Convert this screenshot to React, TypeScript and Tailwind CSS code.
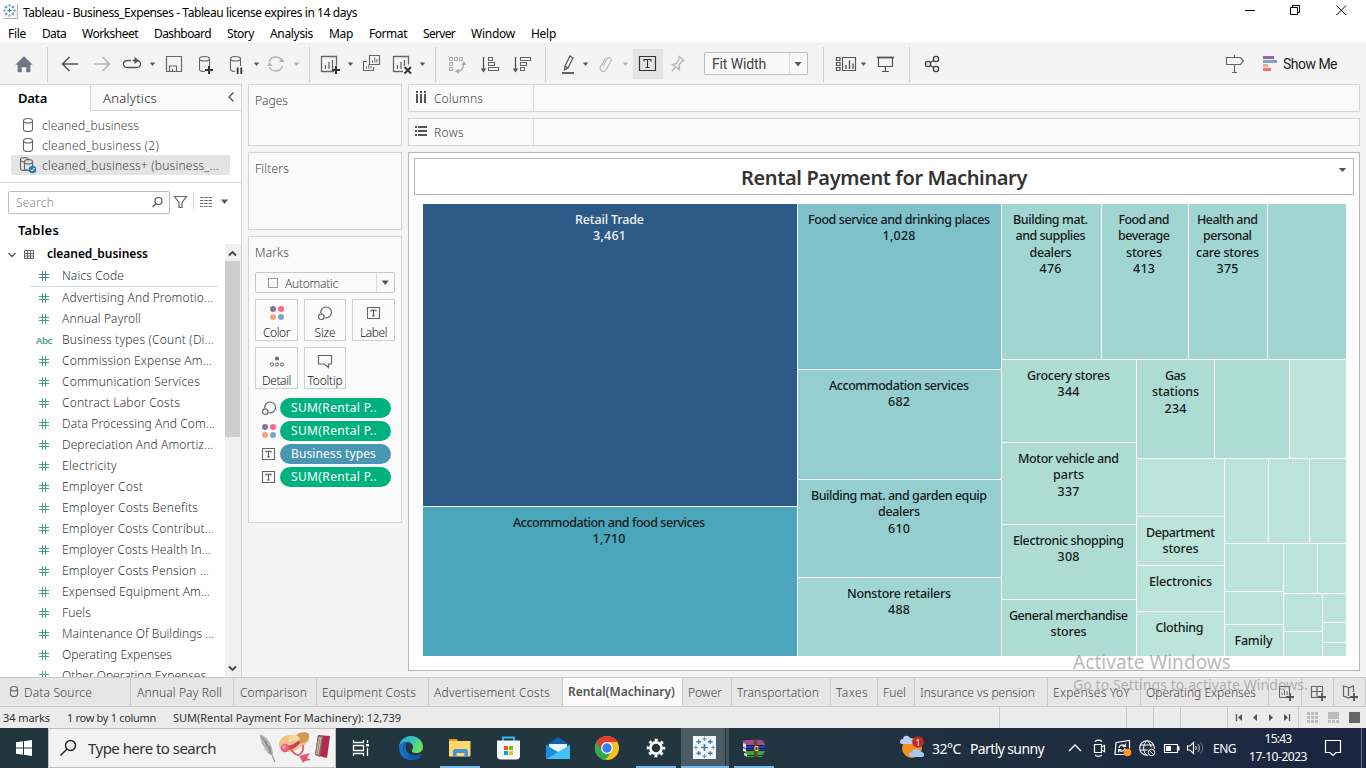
import { useLayoutEffect, useRef, type ReactNode } from "react";

/* Text run whose tracking is fitted to a column width. */
function Fit({ w, className = "", children }: { w: number; className?: string; children: string }) {
  const ref = useRef<HTMLSpanElement>(null);
  useLayoutEffect(() => {
    const el = ref.current;
    if (!el) return;
    el.style.letterSpacing = "0px";
    const natural = el.getBoundingClientRect().width;
    el.style.letterSpacing = `${((w - natural) / children.length).toFixed(3)}px`;
  }, [w, children]);
  return (
    <span ref={ref} className={`inline-block shrink-0 self-center whitespace-pre ${className}`}>
      {children}
    </span>
  );
}

/* Slice of a bar; x and y are the origin of the slice in window space. */
function Pic({ x, y, w, h, children, className = "" }: { x: number; y: number; w: number; h: number; children?: ReactNode; className?: string }) {
  return (
    <svg width={w} height={h} viewBox={`${x} ${y} ${w} ${h}`} fill="none" className={`block shrink-0 ${className}`}>
      {children}
    </svg>
  );
}

function Caret({ x, y = 62.5, c = "#555" }: { x: number; y?: number; c?: string }) {
  return <path d={`M${x - 2.7} ${y}h5.4l-2.7 3.6z`} fill={c} />;
}

function Sep() {
  return <div className="mt-[3px] h-[35px] w-px shrink-0 bg-[#d0d0d0]" />;
}

function Cyl({ x, y, w = 10, h = 13, c = "#666" }: { x: number; y: number; w?: number; h?: number; c?: string }) {
  return (
    <path
      d={`M${x} ${y + 2.2}v${h - 4.4}c0 3 ${w} 3 ${w} 0v-${h - 4.4}M${x} ${y + 2.2}c0 -3 ${w} -3 ${w} 0c0 3 -${w} 3 -${w} 0`}
      stroke={c}
      strokeWidth="1.1"
    />
  );
}

function TableauMark({ cx, cy, s, c1, c2 }: { cx: number; cy: number; s: number; c1: string; c2: string }) {
  const plus = (x: number, y: number, r: number) => `M${cx + (x - r) * s} ${cy + y * s}h${2 * r * s}M${cx + x * s} ${cy + (y - r) * s}v${2 * r * s}`;
  return (
    <>
      <path d={plus(0, 0, 3)} stroke={c1} strokeWidth={1.4 * s} />
      <path d={plus(-5, -5, 2) + plus(5, -5, 2) + plus(-5, 5, 2) + plus(5, 5, 2)} stroke={c1} strokeWidth={1.1 * s} />
      <path d={plus(0, -7.5, 1.8) + plus(0, 7.5, 1.8) + plus(-7.5, 0, 1.8) + plus(7.5, 0, 1.8)} stroke={c2} strokeWidth={1 * s} />
    </>
  );
}

function TitleBar() {
  return (
    <div className="flex h-[23px] bg-white text-black">
      <Pic x={0} y={0} w={23} h={23}>
        <path d="M3 3.500h14.500v15H3z" fill="#f7f7f7" />
        <path d="M17.500 4v14.500H3" stroke="#b5b5b5" />
        <TableauMark cx={9.500} cy={10.500} s={0.68} c1="#2f6f9e" c2="#3f8fc0" />
      </Pic>
      <Fit w={334} className="pt-px text-[12px] leading-[23px]">Tableau - Business_Expenses - Tableau license expires in 14 days</Fit>
      <div className="flex-1" />
      <Pic x={1236} y={0} w={130} h={23}>
        <path d="M1245 10.500h10" stroke="#000" />
        <path d="M1290.500 7.500h7v7h-7zM1292.500 7.500v-2h7v7h-2" stroke="#000" />
        <path d="M1336.500 5.500l9.500 9.500M1346 5.500l-9.500 9.500" stroke="#000" />
      </Pic>
    </div>
  );
}

const MENU: [string, string, number][] = [
  ["File", "ml-2", 18],
  ["Data", "ml-4", 24],
  ["Worksheet", "ml-4", 56],
  ["Dashboard", "ml-4", 57],
  ["Story", "ml-4", 27],
  ["Analysis", "ml-4", 43],
  ["Map", "ml-4", 24],
  ["Format", "ml-4", 38],
  ["Server", "ml-4", 32],
  ["Window", "ml-4", 44],
  ["Help", "ml-4", 25],
];

function MenuBar() {
  return (
    <div className="flex h-5 bg-white text-[12px] leading-5 text-black">
      {MENU.map(([t, m, w]) => (
        <span key={t} className={`flex ${m}`}>
          <Fit w={w} className="pt-0.5">{t}</Fit>
        </span>
      ))}
    </div>
  );
}

function Toolbar() {
  return (
    <div className="flex h-[41px] border-t border-[#ebebeb] bg-[#f4f4f4]">
      <Pic x={0} y={44} w={47} h={40}>
        <path d="M24 56.300l8.700 8.400h-2.400v7.500h-4v-5h-4.600v5h-4v-7.500h-2.400z" fill="#6d7987" />
      </Pic>
      <Sep />
      <Pic x={48} y={44} w={261} h={40}>
        <path d="M78 64H63M69.500 57l-7 7 7 7" stroke="#555" strokeWidth="1.600" />
        <path d="M94 64h15M102.500 57l7 7-7 7" stroke="#b5b5b5" strokeWidth="1.600" />
        <path d="M131 60.500h-3c-6 0-6 7 0 7h8c6 0 6-7 .5-7h-4" stroke="#555" strokeWidth="1.300" />
        <path d="M134.500 57v7l4.500-3.500z" fill="#555" />
        <Caret x={152.500} />
        <path d="M166.500 56.500h15v15h-15zM169.500 71v-5h7v5M172.500 69v2" stroke="#666" strokeWidth="1.200" />
        <Cyl x={199.500} y={56.500} w={10} h={15} />
        <path d="M205 71h8M209 67v8" stroke="#f4f4f4" strokeWidth="4.500" />
        <path d="M205 70h8M209 66v8" stroke="#333" strokeWidth="2" />
        <Cyl x={230.500} y={56.500} w={10} h={15} />
        <path d="M235 66h8v8h-8z" fill="#f4f4f4" />
        <path d="M237.700 67.500v6.500M241.300 67.500v6.500" stroke="#333" strokeWidth="1.800" />
        <Caret x={256.500} />
        <path d="M269 62a7 7 0 0 1 13-1M282.500 66a7 7 0 0 1-13 1" stroke="#b5b5b5" strokeWidth="1.400" />
        <path d="M279 62h5.500l-2.500-4zM267 66h5.500l-3-4z" fill="#b5b5b5" />
        <Caret x={296.500} c="#b0b0b0" />
      </Pic>
      <Sep />
      <Pic x={310} y={44} w={125} h={40}>
        <path d="M334 71.500h-12.500v-15h15v9M325.500 69v-4M329 69v-7M332.500 69v-9" stroke="#666" strokeWidth="1.300" />
        <path d="M332 70h8M336 66v8" stroke="#333" strokeWidth="2" />
        <Caret x={350.500} />
        <path d="M369.500 55.500h10v9h-10zM367 61.500h-3.500v9h10v-3.500" stroke="#666" strokeWidth="1.100" />
        <path d="M372.500 62.500v-2M374.800 62.500v-5M377 62.500v-3.500M366.500 68.500v-2M368.800 68.500v-4M371 68.500v-2.500" stroke="#666" />
        <path d="M403 71.500h-9.500v-15h15v8M397.500 69v-4M401 69v-7M404.500 66v-6" stroke="#666" strokeWidth="1.300" />
        <path d="M404.500 67l6.500 6.500M411 67l-6.500 6.500" stroke="#333" strokeWidth="2" />
        <Caret x={422.500} />
      </Pic>
      <Sep />
      <Pic x={436} y={44} w={109} h={40}>
        <path d="M449.500 57.500h3v3h-3zM454.500 57.500h3v3h-3zM459.500 57.500h3v3h-3zM449.500 62.500h3v3h-3zM449.500 67.500h3v3h-3z" stroke="#aaa" />
        <path d="M463.500 64c0 5-2 7-6 7.500" stroke="#aaa" strokeWidth="1.300" />
        <path d="M461 65l3-4 2.500 4zM459 68.500l-4 3 4 2.500z" fill="#aaa" />
        <path d="M483.500 57v13" stroke="#555" strokeWidth="1.300" />
        <path d="M480.800 68.500h5.400l-2.700 4z" fill="#555" />
        <path d="M488.500 57.500h4v3h-4zM488.500 62.500h6v3h-6zM488.500 67.500h10v3h-10z" stroke="#666" strokeWidth="1.100" />
        <path d="M515.500 57v13" stroke="#555" strokeWidth="1.300" />
        <path d="M512.800 68.500h5.400l-2.700 4z" fill="#555" />
        <path d="M520.500 57.500h10v3h-10zM520.500 62.500h6v3h-6zM520.500 67.500h4v3h-4z" stroke="#666" strokeWidth="1.100" />
      </Pic>
      <Sep />
      <Pic x={546} y={44} w={87} h={40}>
        <path d="M570 56l3 2-5 10-3.500 2 .5-4zM565 66l3 2" stroke="#555" strokeWidth="1.200" />
        <path d="M562 73h12" stroke="#555" strokeWidth="1.800" />
        <Caret x={585.500} />
        <path d="M603 66l4-7c1.500-3 5.500-.5 4 2l-5 9c-2 3-7 .5-5.500-3l5-9" stroke="#b8b8b8" strokeWidth="1.200" />
        <Caret x={625.500} c="#b0b0b0" />
      </Pic>
      <div className="mt-[5px] h-[30px] w-[30px] shrink-0 bg-[#e4e4e4]">
        <Pic x={633} y={49} w={30} h={30}>
          <path d="M639.500 56.500h16v14h-16z" stroke="#333" strokeWidth="1.200" />
          <path d="M644 61.500v-2h7v2M647.500 59.500v8M645.500 67.500h4" stroke="#333" strokeWidth="1.100" />
        </Pic>
      </div>
      <Pic x={663} y={44} w={41} h={40}>
        <path d="M679 56.500l5 4-2 .5-3 4 .5 4.500-7-5 4-1 2.500-4.500zM675 67.500l-3 3.500" stroke="#b5b5b5" strokeWidth="1.300" />
      </Pic>
      <div className="mt-2 flex h-[23px] w-[104px] shrink-0 rounded-[2px] border border-[#bdbdbd] bg-[#f8f8f8]">
        <div className="flex w-[85px] items-center border-r border-[#dcdcdc] pl-[7px] font-['Roboto',sans-serif] text-[14px] leading-none text-[#444]">
          <Fit w={54}>Fit Width</Fit>
        </div>
        <Pic x={790} y={53} w={17} h={21}>
          <path d="M794.500 62h7l-3.500 4.500z" fill="#555" />
        </Pic>
      </div>
      <div className="w-[15px] shrink-0" />
      <Sep />
      <Pic x={824} y={44} w={85} h={40}>
        <path d="M836.500 57.500h3.500v3h-3.500zM836.500 62.500h3.500v3h-3.500zM836.500 67.500h3.500v3h-3.500zM842.500 57.500h13v13h-13z" stroke="#555" strokeWidth="1.200" />
        <path d="M846 69v-4M849.500 69v-8.500M853 69v-5.500" stroke="#555" strokeWidth="1.400" />
        <Caret x={863.500} />
        <path d="M877 57.500h17" stroke="#555" strokeWidth="1.800" />
        <path d="M878.500 58v8.500h14V58M885.500 66.500v5M882 71.500h7" stroke="#555" strokeWidth="1.200" />
      </Pic>
      <Sep />
      <Pic x={910} y={44} w={60} h={40}>
        <path d="M930.500 62.500l3-2M930.500 65.500l3 2" stroke="#444" strokeWidth="1.300" />
        <circle cx="928" cy="64" r="2.600" stroke="#444" strokeWidth="1.400" />
        <circle cx="936" cy="59" r="2.600" stroke="#444" strokeWidth="1.400" />
        <circle cx="936" cy="69" r="2.600" stroke="#444" strokeWidth="1.400" />
      </Pic>
      <div className="flex-1" />
      <Pic x={1220} y={44} w={63} h={40}>
        <path d="M1226.500 57.500h14l3 3.500-3 3.500h-14zM1234.500 55v2.500M1234.500 64.500v8M1232 72.500h5" stroke="#666" strokeWidth="1.200" />
        <path d="M1263 56h11v3h-11z" fill="#87709b" />
        <path d="M1263 60h14v3h-14z" fill="#7ea3cc" />
        <path d="M1263 64h5v3h-5z" fill="#f3a680" />
        <path d="M1263 68h8v3h-8z" fill="#f96a7d" />
      </Pic>
      <div className="flex w-[83px] font-['Roboto',sans-serif] text-[14px] leading-[38px] text-[#222]">
        <Fit w={54}>Show Me</Fit>
      </div>
    </div>
  );
}

const FIELDS: [string, number][] = [
  ["Advertising And Promotio...", 151],
  ["Annual Payroll", 79],
  ["Business types (Count (Di...", 152],
  ["Commission Expense Am...", 150],
  ["Communication Services", 138],
  ["Contract Labor Costs", 118],
  ["Data Processing And Com...", 153],
  ["Depreciation And Amortiz...", 151],
  ["Electricity", 55],
  ["Employer Cost", 81],
  ["Employer Costs Benefits", 136],
  ["Employer Costs Contribut...", 152],
  ["Employer Costs Health In...", 149],
  ["Employer Costs Pension ...", 147],
  ["Expensed Equipment Am...", 148],
  ["Fuels", 29],
  ["Maintenance Of Buildings ...", 152],
  ["Operating Expenses", 110],
  ["Other Operating Expenses", 144],
];

function Hash({ c }: { c: string }) {
  return (
    <svg width="10" height="10" viewBox="0 0 10 10" fill="none" className="block shrink-0">
      <path d="M3.500 0v10M6.500 0v10M0 3.500h10M0 6.500h10" stroke={c} strokeWidth="1" />
    </svg>
  );
}

function FieldRow({ name, w, color }: { name: string; w: number; color: string }) {
  const abc = name.startsWith("Business types");
  return (
    <div className="flex h-[21px] shrink-0 items-center text-[12px] leading-[21px] text-[#333]">
      <div className="flex w-[62px] shrink-0 items-center pl-[39px]">
        {abc ? <Fit w={16} className="-ml-[3px] pt-px text-[9.500px] font-semibold text-[#4aa583]">Abc</Fit> : <Hash c={color} />}
      </div>
      <Fit w={w}>{name}</Fit>
    </div>
  );
}

function DataPane() {
  return (
    <div className="flex h-full w-[242px] shrink-0 flex-col border-r border-[#d4d4d4] bg-white font-light">
      <div className="flex h-[27px] shrink-0 text-[13px] leading-[26px] text-[#222]">
        <div className="flex w-[90px] border-t border-[#d4d4d4] pl-[18px]">
          <Fit w={29} className="font-semibold text-black">Data</Fit>
        </div>
        <div className="flex flex-1 justify-between border border-r-0 border-[#d4d4d4] bg-[#fafafa] pl-3">
          <Fit w={54} className="text-[13px]">Analytics</Fit>
          <Pic x={221} y={85} w={20} h={25}>
            <path d="M233.500 92.500l-4.500 4.500 4.500 4.500" stroke="#555" strokeWidth="1.300" />
          </Pic>
        </div>
      </div>
      <div className="flex h-[72px] shrink-0 flex-col border-b border-[#dcdcdc] pt-1 text-[12px] leading-5 text-[#444]">
        <div className="flex h-5">
          <Pic x={0} y={115} w={42} h={20}>
            <Cyl x={23.500} y={118.500} w={9} h={13} />
          </Pic>
          <Fit w={97} className="pt-px">cleaned_business</Fit>
        </div>
        <div className="flex h-5">
          <Pic x={0} y={135} w={42} h={20}>
            <Cyl x={23.500} y={138.500} w={9} h={13} />
          </Pic>
          <Fit w={117} className="pt-px">cleaned_business (2)</Fit>
        </div>
        <div className="mr-[11px] ml-[11px] flex h-5 bg-[#e4e4e4]">
          <Pic x={11} y={155} w={31} h={20}>
            <Cyl x={20.500} y={157.500} w={8} h={13} />
            <path d="M25 160.500h8v9h-8z" fill="#e4e4e4" />
            <Cyl x={24.500} y={159.500} w={8} h={11} />
            <circle cx="32.500" cy="169.500" r="3.800" fill="#2e7da0" />
            <path d="M30.500 169.500l1.500 1.500 2.500-3" stroke="#fff" />
          </Pic>
          <Fit w={177} className="pt-px">cleaned_business+ (business_...</Fit>
        </div>
      </div>
      <div className="flex h-[38px] shrink-0 pt-2 pl-2">
        <div className="flex h-[23px] w-[162px] items-center justify-between rounded-[2px] border border-[#bbb] pl-[7px] text-[12px] leading-[21px] text-[#888]">
          <Fit w={38}>Search</Fit>
          <Pic x={149} y={192} w={20} h={21}>
            <circle cx="158.500" cy="201" r="3.500" stroke="#555" strokeWidth="1.200" />
            <path d="M156 203.500l-3.500 3.500" stroke="#555" strokeWidth="1.300" />
          </Pic>
        </div>
        <Pic x={170} y={191} w={70} h={23}>
          <path d="M174.500 196.500h12l-4.500 6v5h-3v-5z" stroke="#666" strokeWidth="1.200" />
          <path d="M193.500 193v17" stroke="#d4d4d4" />
          <path d="M200 197.500h12M200 200.500h12M200 203.500h12M200 206.500h12" stroke="#666" strokeWidth="1.200" strokeDasharray="3.300 1" />
          <path d="M221 199.500h7l-3.500 4.500z" fill="#555" />
        </Pic>
      </div>
      <div className="flex h-[23px] shrink-0 pb-[5px] pl-[18px] text-[13px] leading-[18px] font-semibold text-black">
        <Fit w={41}>Tables</Fit>
      </div>
      <div className="flex min-h-0 flex-1">
        <div className="flex w-[225px] flex-col overflow-hidden">
          <div className="flex h-[21px] shrink-0 text-[12px] leading-[20px] font-semibold text-black">
            <Pic x={0} y={244} w={47} h={21}>
              <path d="M8.500 253l3.500 3.500 3.500-3.500" stroke="#555" strokeWidth="1.300" />
              <path d="M24.500 250.500h9v8h-9zM24.500 253.500h9M24.500 256h9M27.500 251v7.500M30.500 251v7.500" stroke="#666" />
            </Pic>
            <Fit w={101} className="self-start">cleaned_business</Fit>
          </div>
          <FieldRow name="Naics Code" w={62} color="#3f7f9f" />
          <div className="mr-[7px] mb-0 ml-[30px] h-px shrink-0 bg-[#dcdcdc]" />
          {FIELDS.map(([n, w]) => (
            <FieldRow key={n} name={n} w={w} color="#45a17e" />
          ))}
        </div>
        <div className="flex h-full w-4 flex-col bg-[#f0f0f0]">
          <Pic x={225} y={244} w={15} h={17}>
            <path d="M229 255.500l3.500-3.500 3.500 3.500" stroke="#444" strokeWidth="1.800" />
          </Pic>
          <div className="h-[176px] w-[15px] bg-[#cdcdcd]" />
          <div className="flex-1" />
          <Pic x={225} y={660} w={15} h={17}>
            <path d="M229 666.500l3.500 3.500 3.500-3.500" stroke="#444" strokeWidth="1.800" />
          </Pic>
        </div>
      </div>
    </div>
  );
}

const DOTS = ["#87709b", "#f96a7d", "#f3a680", "#7ea3cc"];
function ColorIcon() {
  return (
    <svg width="16" height="16" viewBox="0 0 16 16" className="block shrink-0">
      {DOTS.map((c, i) => (
        <circle key={c} cx={4 + (i % 2) * 8} cy={4 + Math.floor(i / 2) * 8} r="3" fill={c} />
      ))}
    </svg>
  );
}
function SizeIcon() {
  return (
    <svg width="16" height="16" viewBox="0 0 16 16" fill="none" className="block shrink-0">
      <path d="M3.800 8.200a5.400 5.400 0 1 1 4.300 4.500" stroke="#666" strokeWidth="1.200" />
      <circle cx="4.300" cy="11.700" r="2.800" stroke="#666" strokeWidth="1.200" />
    </svg>
  );
}
function TextIcon() {
  return (
    <svg width="16" height="16" viewBox="0 0 16 16" fill="none" className="block shrink-0">
      <path d="M1.500 2.500h12v11h-12z" stroke="#666" strokeWidth="1.100" />
      <path d="M5 6.500v-1.300h5v1.300M7.500 5.200v5.800M6.200 11h2.600" stroke="#555" strokeWidth="1.100" />
    </svg>
  );
}
function DetailIcon() {
  return (
    <svg width="16" height="16" viewBox="0 0 16 16" fill="none" className="block shrink-0">
      <circle cx="8" cy="5.500" r="2" fill="#666" />
      <circle cx="3" cy="11.500" r="1.600" stroke="#666" />
      <circle cx="8" cy="11.500" r="1.600" stroke="#666" />
      <circle cx="13" cy="11.500" r="1.600" stroke="#666" />
    </svg>
  );
}
function TooltipIcon() {
  return (
    <svg width="16" height="16" viewBox="0 0 16 16" fill="none" className="block shrink-0">
      <path d="M1.500 2.500h13v8.500h-3v3.500l-4-3.500h-6z" stroke="#666" strokeWidth="1.200" />
    </svg>
  );
}

function MarkButton({ icon, label, w }: { icon: ReactNode; label: string; w: number }) {
  return (
    <div className="flex h-[42px] flex-col items-center border border-[#d0d0d0] bg-[#fafafa] pt-[5px] text-[12px] leading-[14px] text-[#222]">
      {icon}
      <span className="mt-[4px] flex">
        <Fit w={w} className="pt-px">{label}</Fit>
      </span>
    </div>
  );
}

function Pill({ icon, label, w, blue }: { icon: ReactNode; label: string; w: number; blue?: boolean }) {
  return (
    <div className="flex h-5 items-center gap-[3px] pl-[12px]">
      {icon}
      <div className={`flex h-5 w-[111px] rounded-full pl-[11px] text-[12px] leading-5 font-normal text-white ${blue ? "bg-[#4996b2]" : "bg-[#00b180]"}`}>
        <Fit w={w}>{label}</Fit>
      </div>
    </div>
  );
}

function Cards() {
  return (
    <div className="ml-[6px] flex w-[154px] shrink-0 flex-col gap-1.5 text-[12px] font-light text-[#444]">
      <div className="flex h-[62px] items-start border border-[#d4d4d4] bg-[#fafafa] pt-[7px] pl-1.5 leading-[18px]">
        <Fit w={33} className="self-start">Pages</Fit>
      </div>
      <div className="flex h-[78px] items-start border border-[#d4d4d4] bg-[#fafafa] pt-[7px] pl-1.5 leading-[18px]">
        <Fit w={34} className="self-start">Filters</Fit>
      </div>
      <div className="flex h-[287px] flex-col border border-[#d4d4d4] bg-[#fafafa] pl-1.5">
        <div className="flex h-[35px] pb-[4px] leading-[18px]">
          <Fit w={34}>Marks</Fit>
        </div>
        <div className="flex h-[21px] w-[140px] rounded-[2px] border border-[#c8c8c8]">
          <div className="flex w-[121px] items-center border-r border-[#dcdcdc] leading-[19px]">
            <div className="mr-[7px] ml-3 h-[10px] w-[10px] border border-[#999]" />
            <Fit w={53} className="pt-px">Automatic</Fit>
          </div>
          <Pic x={377} y={273} w={17} h={19}>
            <path d="M381.800 280.500h7l-3.500 4.500z" fill="#555" />
          </Pic>
        </div>
        <div className="mt-1.5 grid w-[140px] grid-cols-[43px_42px_43px] gap-1.5">
          <MarkButton icon={<ColorIcon />} label="Color" w={27} />
          <MarkButton icon={<SizeIcon />} label="Size" w={21} />
          <MarkButton icon={<TextIcon />} label="Label" w={27} />
          <MarkButton icon={<DetailIcon />} label="Detail" w={29} />
          <MarkButton icon={<TooltipIcon />} label="Tooltip" w={35} />
        </div>
        <div className="mt-[9px] -ml-1.5 flex flex-col gap-[3px]">
          <Pill icon={<SizeIcon />} label="SUM(Rental P.." w={86} />
          <Pill icon={<ColorIcon />} label="SUM(Rental P.." w={86} />
          <Pill icon={<TextIcon />} label="Business types" w={85} blue />
          <Pill icon={<TextIcon />} label="SUM(Rental P.." w={86} />
        </div>
      </div>
    </div>
  );
}

/* Treemap marks: left, top, right, bottom, fill. */
const MARKS: [number, number, number, number, string][] = [
  [423, 204, 797, 506, "#2c5985"],
  [423, 507, 797, 656, "#4ba5bb"],
  [798, 204, 1001, 369, "#7ec1ca"],
  [798, 370, 1001, 479, "#95cecf"],
  [798, 480, 1001, 577, "#95cecf"],
  [798, 578, 1001, 656, "#a1d5d2"],
  [1002, 204, 1101, 359, "#a1d5d2"],
  [1102, 204, 1188, 359, "#a1d5d2"],
  [1189, 204, 1267, 359, "#a1d5d2"],
  [1268, 204, 1346, 359, "#a1d5d2"],
  [1002, 360, 1136, 442, "#aedcd5"],
  [1002, 443, 1136, 524, "#aedcd5"],
  [1002, 525, 1136, 599, "#aedcd5"],
  [1002, 600, 1136, 656, "#aedcd5"],
  [1137, 360, 1214, 458, "#aedcd5"],
  [1215, 360, 1289, 458, "#aedcd5"],
  [1290, 360, 1346, 458, "#bce4d8"],
  [1137, 459, 1224, 516, "#bce4d8"],
  [1137, 517, 1224, 565, "#bce4d8"],
  [1137, 566, 1224, 611, "#bce4d8"],
  [1137, 612, 1224, 656, "#bce4d8"],
  [1225, 459, 1268, 543, "#bce4d8"],
  [1269, 459, 1309, 543, "#bce4d8"],
  [1310, 459, 1346, 543, "#bce4d8"],
  [1225, 544, 1283, 591, "#bce4d8"],
  [1225, 592, 1283, 624, "#bce4d8"],
  [1225, 625, 1283, 656, "#bce4d8"],
  [1284, 544, 1317, 593, "#bce4d8"],
  [1318, 544, 1346, 593, "#bce4d8"],
  [1284, 594, 1322, 631, "#bce4d8"],
  [1284, 632, 1322, 656, "#bce4d8"],
  [1323, 594, 1346, 622, "#bce4d8"],
  [1323, 623, 1346, 642, "#bce4d8"],
  [1323, 643, 1346, 656, "#bce4d8"],
];

/* Mark labels: center, baseline of the first line, then [text, width] lines. */
const LABELS: [number, number, [string, number][]][] = [
  [609.5, 224, [["Retail Trade", 69], ["3,461", 33]]],
  [609, 527, [["Accommodation and food services", 192], ["1,710", 33]]],
  [899, 224, [["Food service and drinking places", 182], ["1,028", 33]]],
  [899, 390, [["Accommodation services", 140], ["682", 22]]],
  [899, 500, [["Building mat. and garden equip", 176], ["dealers", 42], ["610", 22]]],
  [899, 598, [["Nonstore retailers", 104], ["488", 22]]],
  [1050.5, 224, [["Building mat.", 75], ["and supplies", 70], ["dealers", 42], ["476", 22]]],
  [1144, 224, [["Food and", 51], ["beverage", 52], ["stores", 36], ["413", 22]]],
  [1227.5, 224, [["Health and", 61], ["personal", 49], ["care stores", 63], ["375", 22]]],
  [1068.5, 380, [["Grocery stores", 83], ["344", 22]]],
  [1068.5, 463, [["Motor vehicle and", 101], ["parts", 31], ["337", 22]]],
  [1068.5, 545, [["Electronic shopping", 111], ["308", 22]]],
  [1068.5, 620, [["General merchandise", 119], ["stores", 36]]],
  [1175.5, 380, [["Gas", 21], ["stations", 47], ["234", 22]]],
  [1180.5, 537, [["Department", 69], ["stores", 36]]],
  [1180.5, 586, [["Electronics", 63]]],
  [1179.5, 632, [["Clothing", 48]]],
  [1253.5, 645, [["Family", 38]]],
];

function Treemap() {
  return (
    <svg width="923" height="452" viewBox="423 204 923 452" className="mt-[9px] ml-[8px] block font-medium">
      {MARKS.map(([l, t, r, b, c]) => (
        <rect key={`${l}-${t}`} x={l} y={t} width={r - l} height={b - t} fill={c} />
      ))}
      {LABELS.map(([cx, by, lines], i) =>
        lines.map(([t, w], j) => (
          <text key={`${i}-${j}`} x={cx} y={by + Math.round(j * 16.3)} fontSize="12.500" textAnchor="middle" textLength={w} fill={i === 0 ? "#eef3f7" : "#151a1a"}>
            {t}
          </text>
        ))
      )}
    </svg>
  );
}

function Shelf({ label, w, icon, y }: { label: string; w: number; icon: string; y: number }) {
  return (
    <div className="flex h-7 border border-[#d4d4d4] bg-[#fafafa] text-[12px] leading-[26px] font-light text-[#444]">
      <div className="flex w-[125px] border-r border-[#d4d4d4]">
        <Pic x={409} y={y} w={25} h={26}>
          <path d={icon} fill="#555" />
        </Pic>
        <Fit w={w} className="pt-px">{label}</Fit>
      </div>
    </div>
  );
}

function Sheet() {
  return (
    <div className="ml-[6px] flex w-[952px] shrink-0 flex-col">
      <Shelf
        label="Columns"
        w={49}
        y={85}
        icon="M416 91h2v2h-2zM420 91h2v2h-2zM424 91h2v2h-2zM416 94h2v9h-2zM420 94h2v9h-2zM424 94h2v9h-2z"
      />
      <div className="h-1.5" />
      <Shelf
        label="Rows"
        w={30}
        y={119}
        icon="M415 126h2v2h-2zM415 130h2v2h-2zM415 134h2v2h-2zM418 126h9v2h-9zM418 130h9v2h-9zM418 134h9v2h-9z"
      />
      <div className="mt-1.5 flex h-[519px] flex-col border border-[#b5b5b5] bg-white px-[5px] pt-[5px]">
        <div className="flex h-[37px] border border-[#b5b5b5]">
          <div className="w-[326px]" />
          <Fit w={286} className="pt-0.5 text-[20px] leading-[38px] font-semibold text-[#333]">Rental Payment for Machinary</Fit>
          <div className="flex-1" />
          <Pic x={1335} y={159} w={18} h={35}>
            <path d="M1338.800 168h7.400l-3.700 4z" fill="#555" />
          </Pic>
        </div>
        <div className="-ml-px h-[462px] pl-[2px]">
          <Treemap />
        </div>
      </div>
    </div>
  );
}

const TABS: [string, number, number][] = [
  ["Annual Pay Roll", 103, 85],
  ["Comparison", 83, 67],
  ["Equipment Costs", 112, 94],
  ["Advertisement Costs", 134, 116],
  ["Rental(Machinary)", 120, 107],
  ["Power", 49, 34],
  ["Transportation", 99, 82],
  ["Taxes", 47, 32],
  ["Fuel", 37, 23],
  ["Insurance vs pension", 133, 115],
  ["Expenses YoY", 93, 77],
  ["Operating Expenses", 128, 110],
];

function SheetTabs() {
  return (
    <div className="flex h-[30px] border-y border-[#cacaca] bg-[#e6e6e6] text-[12px] leading-[30px] font-light text-[#444]">
      <div className="flex w-[131px] shrink-0 border-r border-[#cacaca]">
        <Pic x={0} y={678} w={24} h={28}>
          <Cyl x={10.500} y={686.500} w={7} h={10} />
        </Pic>
        <Fit w={68} className="pt-0.5">Data Source</Fit>
      </div>
      {TABS.map(([t, w, tw], i) => {
        const on = t.startsWith("Rental");
        return (
          <div
            key={t}
            className={`flex shrink-0 border-r border-[#cacaca] ${i < 2 ? "pl-[6px]" : "pl-[5px]"} ${on ? "bg-[#fafafa] font-semibold text-[#555]" : ""}`}
            style={{ width: w }}
          >
            <Fit w={tw} className={on ? "" : "pt-0.5"}>{t}</Fit>
          </div>
        );
      })}
      <Pic x={1269} y={678} w={97} h={28}>
        <path d="M1289 697.500h-9.500v-11h10v7M1282 695v-2.500M1284.500 695v-5M1287 695v-4" stroke="#666" />
        <path d="M1286 697h8M1290 693v8" stroke="#555" strokeWidth="1.800" />
        <path d="M1301.500 678v28M1333.500 678v28M1365.500 678v28" stroke="#cacaca" />
        <path d="M1318 697.500h-6.500v-11h11v6M1317 687v10M1311.500 691.500h11" stroke="#666" strokeWidth="1.200" />
        <path d="M1318 697h8M1322 693v8" stroke="#555" strokeWidth="1.800" />
        <path d="M1348.500 689v-1.500l-5-1.500v10l5 2 1.500-.8M1348.500 688v8M1348.500 688l5-2v6" stroke="#666" strokeWidth="1.200" />
        <path d="M1350 697h8M1354 693v8" stroke="#555" strokeWidth="1.800" />
      </Pic>
    </div>
  );
}

function StatusBar() {
  return (
    <div className="flex h-[21px] bg-[#ebebeb] text-[11px] leading-[21px] text-[#333]">
      <div className="flex w-[67px] pl-[3px]"><Fit w={47}>34 marks</Fit></div>
      <div className="flex w-[106px]"><Fit w={89}>1 row by 1 column</Fit></div>
      <Fit w={228}>SUM(Rental Payment For Machinery): 12,739</Fit>
      <div className="flex-1" />
      <Pic x={990} y={707} w={376} h={21}>
        <path d="M999.500 707v21M1126.500 707v21M1153.500 707v21M1180.500 707v21M1227.500 707v21M1298.500 707v21" stroke="#c6c6c6" />
        <path d="M1236.500 714v7M1289.500 714v7" stroke="#555" strokeWidth="1.300" />
        <path d="M1242 714v7l-4-3.500zM1257 714v7l-4-3.500zM1269 714v7l4-3.500zM1284 714v7l4-3.500z" fill="#555" />
        <path d="M1307 712h3v3h-3zM1311 712h3v3h-3zM1315 712h3v3h-3zM1307 716h3v3h-3zM1311 716h3v3h-3zM1315 716h3v3h-3zM1307 720h3v3h-3zM1311 720h3v3h-3zM1315 720h3v3h-3z" fill="#bdbdbd" />
        <path d="M1328 712h11v7h-11zM1328 720h3v3h-3zM1332 720h3v3h-3zM1336 720h3v3h-3z" fill="#bdbdbd" />
        <path d="M1349 712h11v11h-11z" fill="#666" />
      </Pic>
    </div>
  );
}

function Taskbar() {
  return (
    <div className="flex h-10 bg-linear-to-r from-[#21353e] via-[#23363f] via-50% to-[#1a2540] text-white">
      <Pic x={0} y={728} w={48} h={40}>
        <path d="M16 742.300l7-1v6.200h-7zM24 741.200l8-1.200v7.500h-8zM16 748.500h7v6.200l-7-1zM24 748.500h8v7.500l-8-1.200z" fill="#fff" />
      </Pic>
      <div className="flex w-[288px] shrink-0 border border-[#bfbfbf] bg-[#f2f2f2] text-[15px] leading-[38px] text-[#333]">
        <Pic x={49} y={729} w={39} h={38}>
          <circle cx="70.500" cy="745.500" r="5" stroke="#222" strokeWidth="1.400" />
          <path d="M67 749l-6.500 6.500" stroke="#222" strokeWidth="1.500" />
        </Pic>
        <Fit w={128}>Type here to search</Fit>
        <Pic x={216} y={729} w={119} h={38}>
          <path d="M260 734c7 3 12 9 13 20l-2 1-4-2 1-1-4-3 1-1-4-5 1-1c-2-3-2-5-2-8z" fill="#b4b4b4" />
          <path d="M261 736c5 6 9 14 14 26M266 741l1 6M270 746v7" stroke="#777" strokeWidth=".9" />
          <path d="M279 745c0-8 9-12 16-9 4-4 11-5 14-2 2 7-3 11-9 13-3 5-12 6-18 3-2-1-3-3-3-5z" fill="#f0c183" />
          <path d="M296 735c4-3 9-4 13-1 1 6-4 9-10 10z" fill="#d39a4f" />
          <path d="M289 736c4-2 9-1 11 2l-1 5c-3-3-8-3-11 0z" fill="#f8d9a5" />
          <path d="M285 746c6 0 11-3 14-6l1 3c-3 4-8 7-14 7z" fill="#c9405f" />
          <circle cx="285" cy="748" r="4.300" fill="#e2607b" />
          <circle cx="284" cy="747" r="2" fill="#f497a8" />
          <path d="M291 749c2 4 5 6 8 6M299 755c3-2 5-5 4-10" stroke="#dc5a76" strokeWidth="1.800" />
          <path d="M299 756l11-3-3 5 4 2-6 1-2 2-2-4z" fill="#dc5a76" />
          <path d="M318 735l12 1-3 22-12-3z" fill="#b5284d" />
          <path d="M318 735l5 1-3 21-5-2z" fill="#8d6f60" />
          <path d="M319.500 737l-3 17M321 737l-3 18" stroke="#e6d9c8" strokeWidth=".8" />
        </Pic>
      </div>
      <Pic x={336} y={728} w={564} h={40}>
        <path d="M353.500 740v2.500h10V740M353.500 745.500h10v5h-10zM353.500 756v-2.500h10v2.500" stroke="#fff" strokeWidth="1.300" />
        <path d="M367.500 740v3M367.500 748v8" stroke="#fff" strokeWidth="1.300" />
        <path d="M366 744h3v2.500h-3z" fill="#fff" />
        <defs>
          <linearGradient id="edgeTop" x1="0" y1="0" x2="1" y2="0.400">
            <stop offset="0" stopColor="#2aa6e6" />
            <stop offset="0.550" stopColor="#35c4c4" />
            <stop offset="1" stopColor="#6ce05a" />
          </linearGradient>
          <linearGradient id="edgeLow" x1="0" y1="0" x2="0.600" y2="1">
            <stop offset="0" stopColor="#1b86d6" />
            <stop offset="1" stopColor="#1250a0" />
          </linearGradient>
        </defs>
        <path d="M399 748c0-7 5-12 12-12s12 5 12 11c0 4-3 6-7 6-3 0-5-1-4-3 1-1 1-2 1-3 0-3-3-5-6-5-4 0-8 3-8 6z" fill="url(#edgeTop)" />
        <path d="M399 747c1-4 5-6 9-5-3 1-5 4-5 7 0 5 5 9 11 9 3 0 5-1 7-2-2 3-6 4-10 4-7 0-12-5-12-13z" fill="#1672c8" />
        <path d="M407 743c-3 4-1 10 4 12 4 1 8 0 11-2-2 6-8 8-13 6-6-3-8-12-2-16z" fill="url(#edgeLow)" />

        <path d="M449 739h8l1 2h-9z" fill="#e0a100" />
        <path d="M449 741h21.500v15.500H449z" fill="#ffd76a" />
        <path d="M453 757v-6c0-1 1-2 2-2h11c1 0 2 1 2 2v6h-3.500v-4h-8v4z" fill="#3f96d9" />
        <path d="M440 766h40v2h-40zM636 766h40v2h-40z" fill="#76b9ed" />

        <path d="M503 741v-3.500h11v3.500" stroke="#2cc0f5" strokeWidth="1.800" />
        <path d="M497 740.500h23v15c0 2.500-1 4-4 4h-15c-3 0-4-1.500-4-4z" fill="#f5f6f7" />
        <path d="M504 746h4v4h-4z" fill="#f25022" />
        <path d="M509 746h4v4h-4z" fill="#7fba00" />
        <path d="M504 751h4v4h-4z" fill="#00a4ef" />
        <path d="M509 751h4v4h-4z" fill="#ffb900" />

        <path d="M546 745l12-8 12 8-12 8z" fill="#0f62ae" />
        <path d="M549 744h18v8h-18z" fill="#e9f3fa" />
        <path d="M546 745l12 7.500-12 6.500z" fill="#2aa9ea" />
        <path d="M570 745l-24 14h24z" fill="#41c3f5" />
        <path d="M546 745v14l12-7z" fill="#1c8ee0" />

        <circle cx="607" cy="748" r="12" fill="#fbc116" />
        <path d="M607 748L596.600 742A12 12 0 0 0 605.500 759.900L612 751z" fill="#31a853" />
        <path d="M596.600 742A12 12 0 0 1 617.400 742H607a6 6 0 0 0-5.200 9z" fill="#e33b2e" />
        <circle cx="607" cy="748" r="5.900" fill="#fff" />
        <circle cx="607" cy="748" r="4.700" fill="#3b7ded" />

        <circle cx="656" cy="748" r="5.600" stroke="#fff" strokeWidth="2.600" />
        <circle cx="656" cy="748" r="8" stroke="#fff" strokeWidth="2.600" strokeDasharray="3 3.283" strokeDashoffset="1.500" />

        <path d="M681 728h44v40h-44z" fill="#4b5c66" />
        <path d="M725 728h1v40h-1z" fill="#26363f" />
        <path d="M726 728h3v40h-3z" fill="#44525c" />
        <path d="M681 766h48v2h-48zM734 766h40v2h-40z" fill="#76b9ed" />
        <path d="M693 736h23v23h-23z" fill="#f4f5f6" />
        <TableauMark cx={704.500} cy={747.500} s={1.150} c1="#3b7fae" c2="#5d9cc6" />

        <path d="M742 741l5-1h15l3 4-1 3h-18z" fill="#a04a98" />
        <path d="M744 746h20v5h-19z" fill="#2440c8" />
        <path d="M745 751h20l-3 6h-16z" fill="#2fae38" />
        <path d="M743 743l3 1v4l-3-1zM743 748l3 1v3l-3-1zM744 753l3 1v3l-3-2z" fill="#e8e0d8" />
        <path d="M746 745.500h18M746 748.500h18M746 750.500h18M747 755.500h16" stroke="#151a2a" />
        <path d="M754 739.500h3.500v17.500H754z" fill="#6a4a20" />
        <path d="M755 746.500h3v4h-3z" stroke="#e3c060" />
      </Pic>
      <Pic x={900} y={728} w={32} h={40}>
        <circle cx="912" cy="748" r="10" fill="#f3901d" />
        <path d="M902 744c-3 0-3-5 1-5 0-4 6-4 7-1 3-1 4 6 1 6z" fill="#b5cdf0" />
        <path d="M911 757c-3 0-3-5 1-5 1-4 8-4 9 0 4 0 4 5 1 5z" fill="#a9c6ef" />
        <circle cx="918" cy="742" r="5.800" fill="#c8281f" />
        <text x="918" y="745.500" fontSize="9" textAnchor="middle" fill="#fff">1</text>
      </Pic>
      <div className="flex w-[38px] text-[14px] leading-[39px]"><Fit w={29}>32°C</Fit></div>
      <div className="flex w-[92px] text-[14px] leading-[39px]"><Fit w={74}>Partly sunny</Fit></div>
      <Pic x={1062} y={728} w={151} h={40}>
        <path d="M1069 751l6-6 6 6" stroke="#fff" strokeWidth="1.400" />
        <path d="M1094.500 744.500h7v8h-7zM1101.500 747l3-1.500v6l-3-1.500M1095 741.500c2-1.500 5-1.500 7 0M1095 755c2 1.500 5 1.500 7 0" stroke="#fff" strokeWidth="1.200" />
        <path d="M1116 742.500l-1 12h9M1116 742.500l13.500-2v8" stroke="#fff" strokeWidth="1.200" />
        <path d="M1119 748c0-3 4-4 6-2M1125 748c0 3-4 4-6 2M1125.500 743.500v3h-3M1118.500 752.500v-3h3" stroke="#fff" strokeWidth="1.100" />
        <circle cx="1127.500" cy="752.500" r="3.800" fill="#ff9a1a" />
        <circle cx="1147" cy="748" r="7.300" stroke="#fff" strokeWidth="1.100" />
        <path d="M1147 740.500c-4.500 4-4.500 11 0 15M1147 740.500c3 2.500 4 5 4 7M1140.500 745h13M1140 750h8" stroke="#fff" />
        <circle cx="1151.500" cy="752.500" r="4.500" fill="#1d2c40" />
        <circle cx="1151.500" cy="752.500" r="3.200" stroke="#fff" />
        <path d="M1149.500 750.500l4 4" stroke="#fff" />
        <path d="M1164.500 744.500h13v8h-13z" stroke="#fff" strokeWidth="1.200" />
        <path d="M1166 746h5v5h-5zM1178 746.500h1.500v4h-1.500z" fill="#fff" />
        <path d="M1187.500 746v4h2.500l3.500 3.500v-11l-3.500 3.500z" stroke="#fff" strokeWidth="1.100" />
        <path d="M1195.500 746c1 1 1 3 0 4" stroke="#fff" />
        <path d="M1197.800 744c2 2 2 6 0 8" stroke="#c5cad1" />
        <path d="M1200 742c3.500 3 3.500 9 0 12" stroke="#6b7685" />
      </Pic>
      <div className="flex w-[37px] text-[12px] leading-[39px]"><Fit w={23}>ENG</Fit></div>
      <div className="flex w-[56px] flex-col items-center pt-0.5 text-[12px] leading-[18px]">
        <Fit w={27}>15:43</Fit>
        <Fit w={58}>17-10-2023</Fit>
      </div>
      <Pic x={1306} y={728} w={60} h={40}>
        <path d="M1325.500 740.500h15v12h-4.500l-3 3-3-3h-4.500z" stroke="#fff" strokeWidth="1.200" />
        <path d="M1361.500 728v40" stroke="#6b7688" />
      </Pic>
    </div>
  );
}

export default function App() {
  return (
    <div className="relative flex h-[768px] w-[1366px] flex-col overflow-hidden bg-[#f4f4f4] font-['Noto_Sans','Open_Sans',sans-serif]">
      <TitleBar />
      <MenuBar />
      <Toolbar />
      <div className="flex h-[593px] shrink-0">
        <DataPane />
        <Cards />
        <Sheet />
      </div>
      <SheetTabs />
      <StatusBar />
      <Taskbar />
      <div className="pointer-events-none absolute top-[650px] left-[1073px] flex flex-col items-start text-[#888]/60">
        <Fit w={158} className="self-start text-[19px] leading-6">Activate Windows</Fit>
        <Fit w={235} className="self-start text-[14px] leading-[22px]">Go to Settings to activate Windows.</Fit>
      </div>
    </div>
  );
}
